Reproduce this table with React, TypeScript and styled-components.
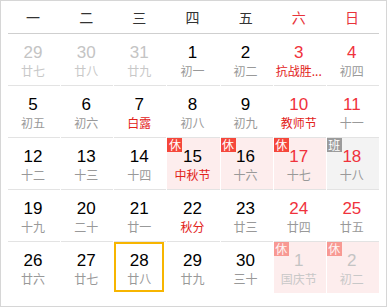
import React from "react";
import styled, { createGlobalStyle, css } from "styled-components";

const Global = createGlobalStyle`
  html, body { margin: 0; padding: 0; background: #fff; }
  body { font-family: "Liberation Sans", "Noto Sans CJK SC", sans-serif; }
`;

const Panel = styled.div`
  box-sizing: border-box;
  width: 387px;
  height: 307px;
  border: 1px solid #d6d6d6;
  padding: 0 7px;
  background: #fff;
`;

const WeekHeader = styled.div`
  display: grid;
  grid-template-columns: repeat(7, 1fr);
  column-gap: 1px;
  height: 32px;
  border-bottom: 1px solid #cfcfcf;
`;

const WeekLabel = styled.div<{ $weekend?: boolean }>`
  display: flex;
  align-items: center;
  justify-content: center;
  padding-right: 2px;
  font-family: "Noto Sans CJK SC", sans-serif;
  font-size: 14px;
  color: ${(p) => (p.$weekend ? "#e8333a" : "#333")};
`;

const Grid = styled.div`
  display: grid;
  grid-template-columns: repeat(7, 1fr);
  column-gap: 1px;
`;

type Tone = "normal" | "rest" | "work";

const Cell = styled.div<{ $first: boolean; $tone: Tone }>`
  position: relative;
  height: 51px;
  border-top: ${(p) => (p.$first ? "0" : "1px solid #e3e3e3")};
  background-clip: padding-box;
  ${(p) =>
    p.$tone === "rest" &&
    css`
      background-color: #fdeded;
    `}
  ${(p) =>
    p.$tone === "work" &&
    css`
      background-color: #f3f3f3;
    `}
`;

const DayBox = styled.div<{ $selected?: boolean }>`
  box-sizing: border-box;
  width: 50px;
  height: 50px;
  border: 2px solid ${(p) => (p.$selected ? "#f7b500" : "transparent")};
  padding-top: 7px;
  display: flex;
  flex-direction: column;
  align-items: center;
`;

const DayNum = styled.div<{ $color: string }>`
  font-family: "Liberation Sans", Arial, sans-serif;
  font-size: 17px;
  line-height: 20px;
  height: 20px;
  color: ${(p) => p.$color};
`;

const Lunar = styled.div<{ $color: string }>`
  font-family: "Noto Sans CJK SC", sans-serif;
  font-size: 12px;
  line-height: 16px;
  height: 16px;
  white-space: nowrap;
  color: ${(p) => p.$color};
`;

const Badge = styled.span<{ $kind: "rest" | "work"; $faded?: boolean }>`
  position: absolute;
  left: 0;
  top: 0;
  width: 15px;
  height: 14px;
  display: flex;
  align-items: center;
  justify-content: center;
  font-family: "Noto Sans CJK SC", sans-serif;
  font-size: 12px;
  line-height: 14px;
  color: #fff;
  background: ${(p) => (p.$kind === "rest" ? "#f5473b" : "#9b9b9b")};
  opacity: ${(p) => (p.$faded ? 0.5 : 1)};
`;

type Day = {
  n: number;
  l: string;
  out?: boolean;
  wk?: boolean;
  fest?: boolean;
  badge?: "rest" | "work";
  sel?: boolean;
};

const rows: Day[][] = [
  [
    { n: 29, l: "廿七", out: true },
    { n: 30, l: "廿八", out: true },
    { n: 31, l: "廿九", out: true },
    { n: 1, l: "初一" },
    { n: 2, l: "初二" },
    { n: 3, l: "抗战胜...", wk: true, fest: true },
    { n: 4, l: "初四", wk: true },
  ],
  [
    { n: 5, l: "初五" },
    { n: 6, l: "初六" },
    { n: 7, l: "白露", fest: true },
    { n: 8, l: "初八" },
    { n: 9, l: "初九" },
    { n: 10, l: "教师节", wk: true, fest: true },
    { n: 11, l: "十一", wk: true },
  ],
  [
    { n: 12, l: "十二" },
    { n: 13, l: "十三" },
    { n: 14, l: "十四" },
    { n: 15, l: "中秋节", fest: true, badge: "rest" },
    { n: 16, l: "十六", badge: "rest" },
    { n: 17, l: "十七", wk: true, badge: "rest" },
    { n: 18, l: "十八", wk: true, badge: "work" },
  ],
  [
    { n: 19, l: "十九" },
    { n: 20, l: "二十" },
    { n: 21, l: "廿一" },
    { n: 22, l: "秋分", fest: true },
    { n: 23, l: "廿三" },
    { n: 24, l: "廿四", wk: true },
    { n: 25, l: "廿五", wk: true },
  ],
  [
    { n: 26, l: "廿六" },
    { n: 27, l: "廿七" },
    { n: 28, l: "廿八", sel: true },
    { n: 29, l: "廿九" },
    { n: 30, l: "三十" },
    { n: 1, l: "国庆节", out: true, badge: "rest" },
    { n: 2, l: "初二", out: true, badge: "rest" },
  ],
];

const weekdays = ["一", "二", "三", "四", "五", "六", "日"];

export default function App() {
  return (
    <>
      <Global />
      <Panel>
        <WeekHeader>
          {weekdays.map((w, i) => (
            <WeekLabel key={w} $weekend={i >= 5}>
              {w}
            </WeekLabel>
          ))}
        </WeekHeader>
        <Grid>
          {rows.map((row, ri) =>
            row.map((d, ci) => {
              const numColor = d.out ? "#c4c4c4" : d.wk ? "#f0323c" : "#000";
              const lunarColor = d.out ? "#c8c8c8" : d.fest ? "#e2231a" : "#999";
              const tone: Tone = d.badge === "rest" ? "rest" : d.badge === "work" ? "work" : "normal";
              return (
                <Cell key={`${ri}-${ci}`} $first={ri === 0} $tone={tone}>
                  {d.badge && (
                    <Badge $kind={d.badge} $faded={d.out}>
                      {d.badge === "rest" ? "休" : "班"}
                    </Badge>
                  )}
                  <DayBox $selected={d.sel}>
                    <DayNum $color={numColor}>{d.n}</DayNum>
                    <Lunar $color={lunarColor}>{d.l}</Lunar>
                  </DayBox>
                </Cell>
              );
            })
          )}
        </Grid>
      </Panel>
    </>
  );
}
